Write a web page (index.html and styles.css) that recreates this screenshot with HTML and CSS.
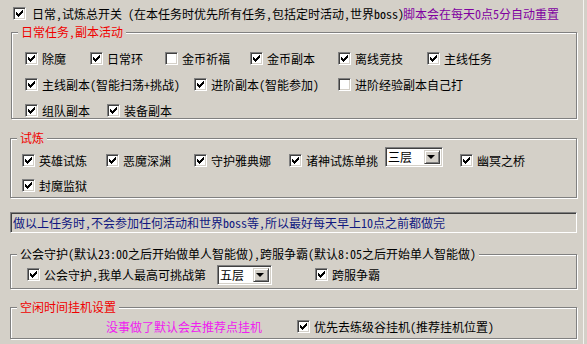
FILE: index.html
```html
<!DOCTYPE html>
<html lang="zh-CN">
<head>
    <meta charset="UTF-8">
    <title>设置</title>
    <link rel="stylesheet" href="styles.css">
</head>
<body>
    <svg class="defs" width="0" height="0">
        <symbol id="chk" viewBox="1 1 11 11">
            <path d="M9 3h1v1h-1z M8 4h2v1h-2z M3 5h1v1h-1z M7 5h3v1h-3z M3 6h2v1h-2z M6 6h3v1h-3z M3 7h5v1h-5z M4 8h3v1h-3z M5 9h1v1h-1z"/>
        </symbol>
    </svg>
    <div class="frame">
        <div class="dialog">
            <div class="row top-row">
                <label class="opt opt-main"><span class="cb on"><svg><use href="#chk"/></svg></span>日常,试炼总开关 (在本任务时优先所有任务,包括定时活动,世界boss)</label>
                <span class="purple">脚本会在每天0点5分自动重置</span>
            </div>

            <!-- 日常任务 -->
            <div class="group g-daily">
                <span class="group-title red">日常任务,副本活动</span>
                <div class="row">
                    <label class="opt w65"><span class="cb on"><svg><use href="#chk"/></svg></span>除魔</label>
                    <label class="opt w75"><span class="cb on"><svg><use href="#chk"/></svg></span>日常环</label>
                    <label class="opt w85"><span class="cb"></span>金币祈福</label>
                    <label class="opt w88"><span class="cb on"><svg><use href="#chk"/></svg></span>金币副本</label>
                    <label class="opt w89"><span class="cb on"><svg><use href="#chk"/></svg></span>离线竞技</label>
                    <label class="opt"><span class="cb on"><svg><use href="#chk"/></svg></span>主线任务</label>
                </div>
                <div class="row gap13">
                    <label class="opt w169"><span class="cb on"><svg><use href="#chk"/></svg></span>主线副本(智能扫荡+挑战)</label>
                    <label class="opt w144"><span class="cb on"><svg><use href="#chk"/></svg></span>进阶副本(智能参加)</label>
                    <label class="opt"><span class="cb"></span>进阶经验副本自己打</label>
                </div>
                <div class="row gap13">
                    <label class="opt w82"><span class="cb on"><svg><use href="#chk"/></svg></span>组队副本</label>
                    <label class="opt"><span class="cb on"><svg><use href="#chk"/></svg></span>装备副本</label>
                </div>
            </div>

            <!-- 试炼 -->
            <div class="group g-trial">
                <span class="group-title red">试炼</span>
                <div class="row">
                    <label class="opt w84"><span class="cb on"><svg><use href="#chk"/></svg></span>英雄试炼</label>
                    <label class="opt w88"><span class="cb on"><svg><use href="#chk"/></svg></span>恶魔深渊</label>
                    <label class="opt w95"><span class="cb on"><svg><use href="#chk"/></svg></span>守护雅典娜</label>
                    <label class="opt w96"><span class="cb on"><svg><use href="#chk"/></svg></span>诸神试炼单挑</label>
                    <div class="combo combo-up w58"><span class="combo-text">三层</span><span class="combo-btn"></span></div>
                    <label class="opt ml17"><span class="cb on"><svg><use href="#chk"/></svg></span>幽冥之桥</label>
                </div>
                <div class="row gap12">
                    <label class="opt"><span class="cb on"><svg><use href="#chk"/></svg></span>封魔监狱</label>
                </div>
            </div>

            <div class="notice">做以上任务时,不会参加任何活动和世界boss等,所以最好每天早上10点之前都做完</div>

            <!-- 公会守护 / 跨服争霸 -->
            <div class="group g-guild">
                <span class="group-title">公会守护(默认23:00之后开始做单人智能做),跨服争霸(默认8:05之后开始单人智能做)</span>
                <div class="row">
                    <label class="opt w190"><span class="cb on"><svg><use href="#chk"/></svg></span>公会守护,我单人最高可挑战第</label>
                    <div class="combo w55"><span class="combo-text">五层</span><span class="combo-btn"></span></div>
                    <label class="opt ml43"><span class="cb on"><svg><use href="#chk"/></svg></span>跨服争霸</label>
                </div>
            </div>

            <!-- 挂机 -->
            <div class="group g-idle">
                <span class="group-title red">空闲时间挂机设置</span>
                <div class="row">
                    <span class="magenta w191">没事做了默认会去推荐点挂机</span>
                    <label class="opt"><span class="cb on"><svg><use href="#chk"/></svg></span>优先去练级谷挂机(推荐挂机位置)</label>
                </div>
            </div>
        </div>
    </div>
</body>
</html>
```

FILE: styles.css
```css
body {
    margin: 0;
    background: #d4d0c8;
    font-family: "Noto Sans Mono CJK SC", "Noto Sans CJK SC", "Noto Sans", sans-serif;
    font-size: 12px;
    color: #000;
}
.defs {
    position: absolute;
}
.frame {
    width: 584px;
    height: 344px;
    box-sizing: border-box;
    border-right: 1px solid #f4f3f0;
}
.dialog {
    width: 567px;
    padding: 7px 0 0 10px;
}

/* filas y casillas */
.row {
    display: flex;
    align-items: center;
    height: 13px;
}
.gap12 { margin-top: 12px; }
.gap13 { margin-top: 13px; }
.opt {
    display: flex;
    align-items: center;
    flex: none;
    line-height: 13px;
    white-space: nowrap;
}
.cb {
    width: 13px;
    height: 13px;
    box-sizing: border-box;
    flex: none;
    margin-right: 4px;
    background: #fff;
    border: 1px solid;
    border-color: #808080 #fff #fff #808080;
    box-shadow: inset 1px 1px 0 #404040, inset -1px -1px 0 #d4d0c8;
}
.cb svg {
    display: block;
    width: 11px;
    height: 11px;
    shape-rendering: crispEdges;
}
.top-row {
    margin-left: 3px;
}
.top-row .cb {
    margin-right: 6px;
}
.opt-main { width: 390px; }

.w55 { width: 55px; }
.w58 { width: 58px; }
.w65 { width: 65px; }
.w75 { width: 75px; }
.w82 { width: 82px; }
.w84 { width: 84px; }
.w85 { width: 85px; }
.w88 { width: 88px; }
.w89 { width: 89px; }
.w95 { width: 95px; }
.w96 { width: 96px; }
.w144 { width: 144px; }
.w169 { width: 169px; }
.w190 { width: 190px; }
.w191 { width: 191px; }
.ml17 { margin-left: 17px; }
.ml43 { margin-left: 43px; }

.red { color: #f00000; }
.purple { color: #8000a0; }
.magenta { color: #f020f0; flex: none; }

/* group boxes */
.group {
    position: relative;
    box-sizing: border-box;
    width: 567px;
    border: 1px solid #808080;
    box-shadow: inset 1px 1px 0 #fff, 1px 1px 0 #fff;
}
.group-title {
    position: absolute;
    top: -8px;
    left: 6px;
    padding: 0 3px;
    line-height: 14px;
    background: #d4d0c8;
    white-space: nowrap;
}
.g-daily {
    margin: 12px 0 0 1px;
    width: 566px;
    height: 87px;
    padding: 19px 0 0 13px;
}
.g-trial {
    margin-top: 19px;
    height: 60px;
    padding: 15px 0 0 11px;
}
.g-guild {
    margin-top: 21px;
    height: 35px;
    padding: 13px 0 0 16px;
}
.g-idle {
    margin-top: 18px;
    height: 32px;
    padding: 12px 0 0 95px;
}

/* sunken text line */
.notice {
    margin-top: 14px;
    box-sizing: border-box;
    width: 567px;
    height: 21px;
    padding: 0 0 0 2px;
    line-height: 19px;
    color: #101880;
    border: 1px solid;
    border-color: #808080 #fff #fff #808080;
    box-shadow: inset 1px 1px 0 #404040, inset -1px -1px 0 #d4d0c8;
    white-space: nowrap;
}

/* combo */
.combo {
    display: flex;
    flex: none;
    box-sizing: border-box;
    height: 20px;
    padding: 2px;
    background: #fff;
    border: 1px solid;
    border-color: #808080 #fff #fff #808080;
    box-shadow: inset 1px 1px 0 #404040, inset -1px -1px 0 #d4d0c8;
}
.combo-up {
    margin-bottom: 7px;
}
.combo-text {
    flex: 1;
    line-height: 14px;
}
.combo-btn {
    position: relative;
    width: 16px;
    height: 14px;
    box-sizing: border-box;
    background: #d4d0c8;
    border: 1px solid;
    border-color: #d4d0c8 #404040 #404040 #d4d0c8;
    box-shadow: inset 1px 1px 0 #fff, inset -1px -1px 0 #808080;
}
.combo-btn::after {
    content: "";
    position: absolute;
    left: 2px;
    top: 4px;
    border-top: 4px solid #000;
    border-left: 4px solid transparent;
    border-right: 4px solid transparent;
    width: 0;
    height: 0;
}
```
